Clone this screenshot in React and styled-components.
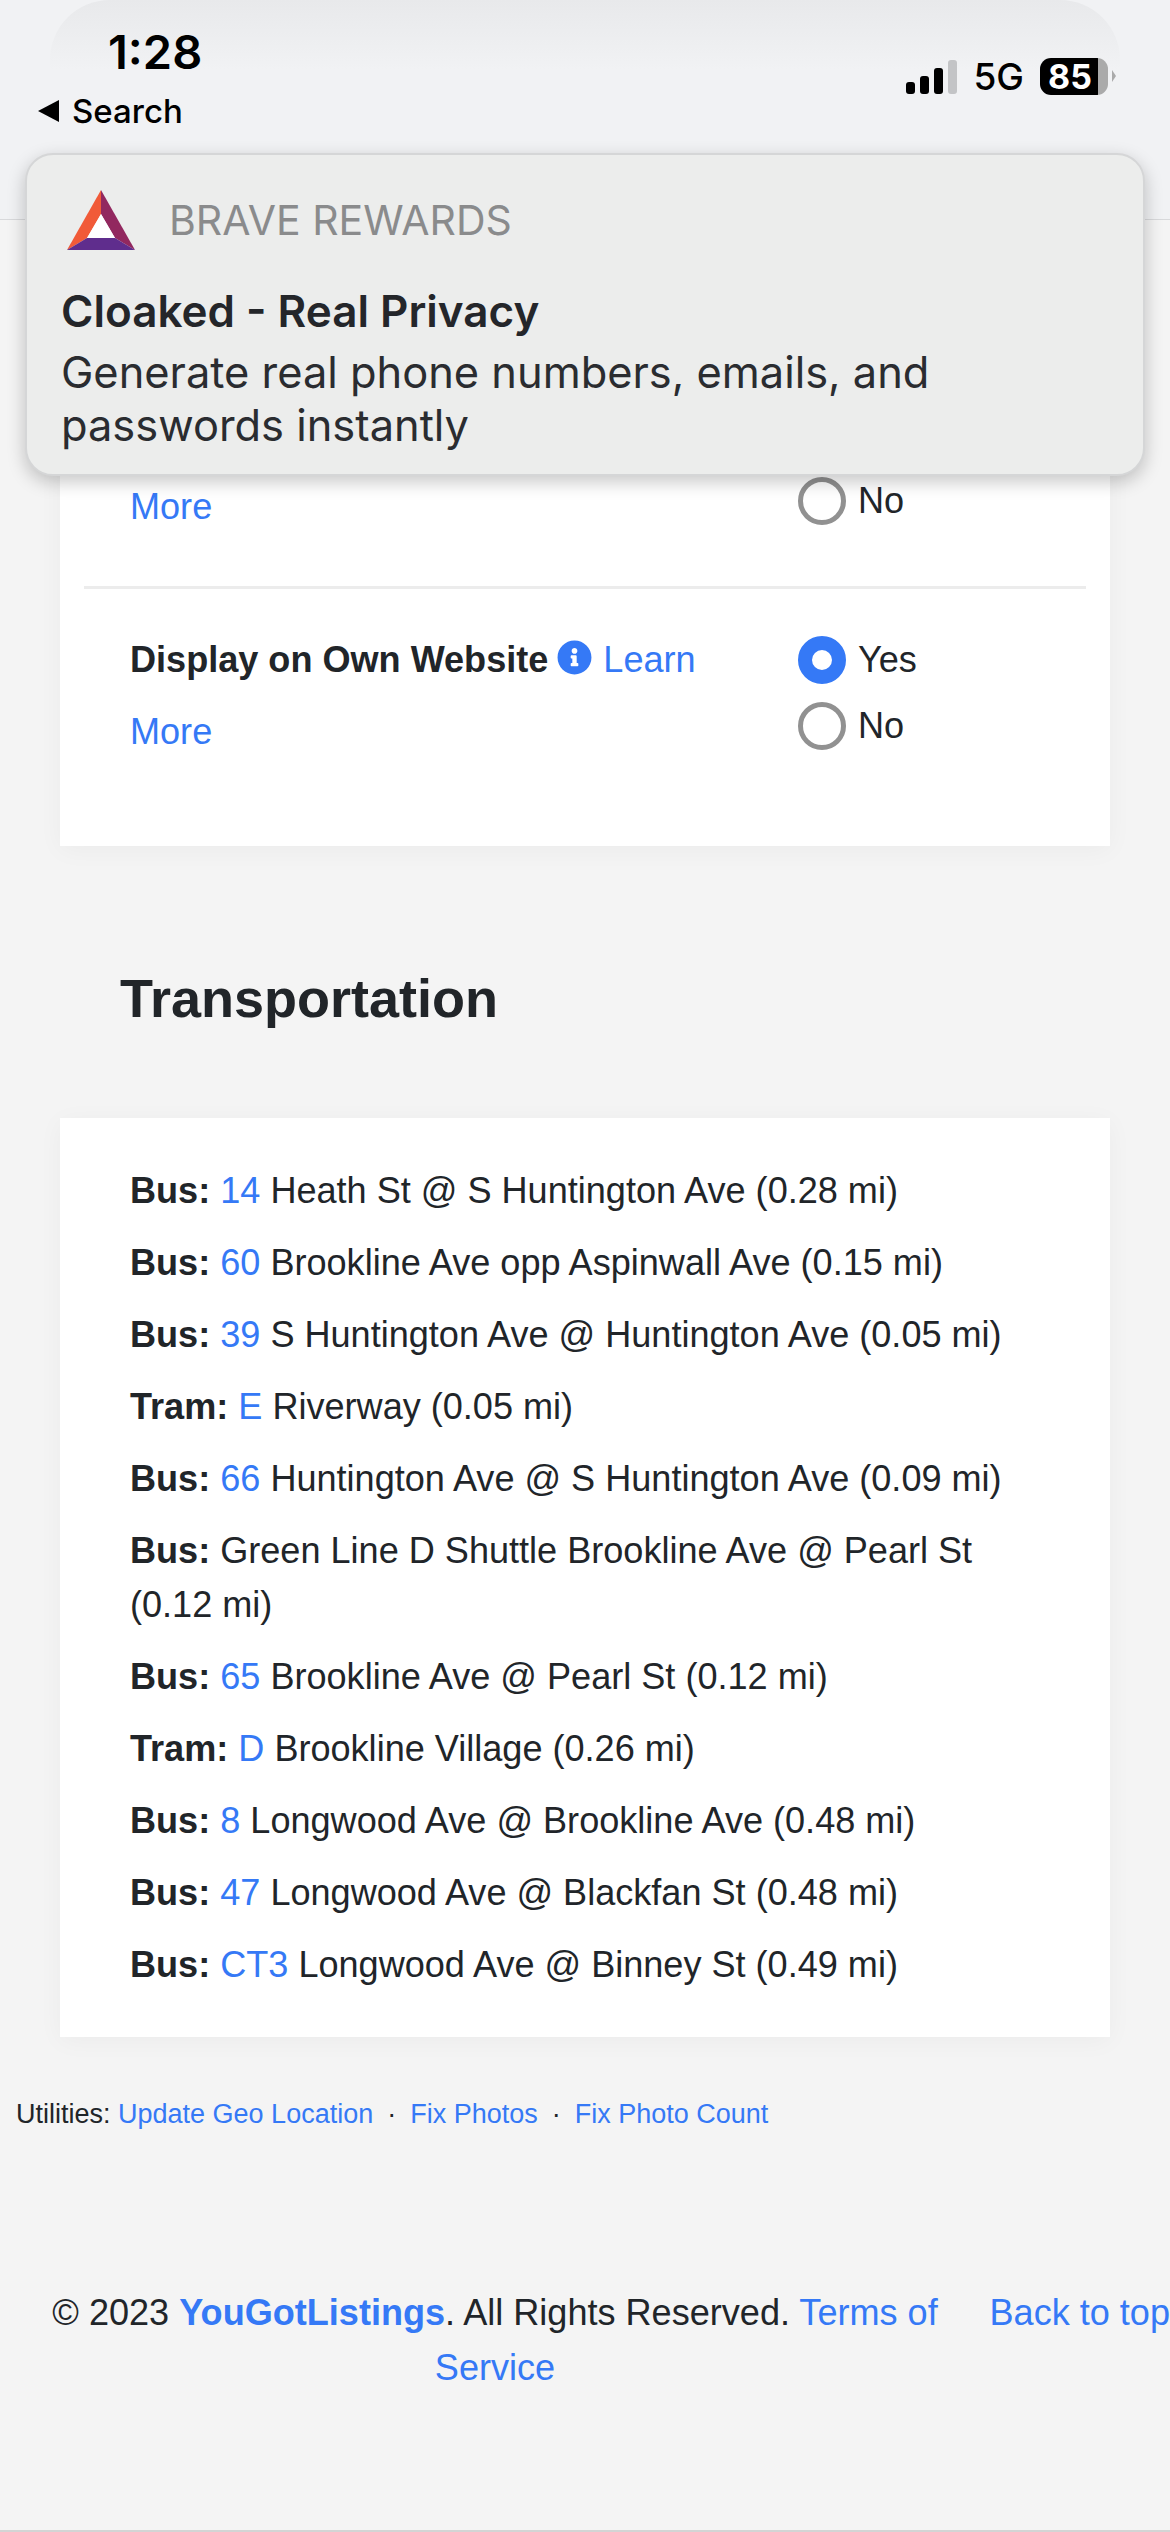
import styled, { createGlobalStyle } from "styled-components"
import { FaInfoCircle } from "react-icons/fa"

const GlobalStyle = createGlobalStyle`
    html, body {
        margin: 0;
        padding: 0;
        background: #f4f4f4;
    }
    * {
        box-sizing: border-box;
    }
`

const Screen = styled.div`
    position: relative;
    width: 1170px;
    height: 2532px;
    overflow: hidden;
    background: #f4f4f4;
    border-bottom: 2px solid #d4d4d4;
    font-family: "Liberation Sans", Arial, sans-serif;
    color: #212529;
    font-size: 36.1px;
`

const Header = styled.header`
    position: relative;
    height: 220px;
    display: flex;
    justify-content: space-between;
    align-items: flex-start;
    padding: 24px 62px 0 38px;
    background: #f1f2f4;
    border-bottom: 1px solid #d8d9db;
    font-family: Inter, Roboto, sans-serif;
    color: #000;
    &::before {
        content: "";
        position: absolute;
        top: 0;
        left: 50px;
        right: 50px;
        height: 70px;
        border-radius: 60px 60px 0 0;
        background: linear-gradient(#e8e9eb, #f1f2f4);
    }
`

const StatusLeft = styled.div`
    position: relative;
    display: flex;
    flex-direction: column;
`

const Time = styled.div`
    margin-left: 70px;
    font-size: 47px;
    line-height: 56px;
    font-weight: 600;
`

const BackLink = styled.div`
    display: flex;
    align-items: center;
    gap: 13px;
    margin-top: 3px;
    font-size: 33px;
    line-height: 56px;
    font-weight: 500;
`

const BackArrow = styled.span`
    width: 0;
    height: 0;
    border-style: solid;
    border-width: 11px 21px 11px 0;
    border-color: transparent #000 transparent transparent;
`

const StatusRight = styled.div`
    position: relative;
    display: flex;
    align-items: center;
    margin-top: 30px;
`

const Signal = styled.div`
    display: flex;
    align-items: flex-end;
    gap: 5px;
    height: 34px;
    margin-right: 16px;
`

const SignalBar = styled.span`
    width: 9px;
    height: ${props => props.$height}px;
    border-radius: 3px;
    background: ${props => props.$off ? "#c3c4c6" : "#000"};
`

const Network = styled.span`
    font-size: 37px;
    font-weight: 500;
    margin-right: 16px;
`

const Battery = styled.div`
    position: relative;
    width: 68px;
    height: 37px;
    border-radius: 11px;
    display: flex;
    align-items: center;
    padding-left: 8px;
    background: linear-gradient(90deg, #000 85%, #aaa 85%);
    color: #fff;
    font-size: 34px;
    font-weight: 700;
    &::after {
        content: "";
        position: absolute;
        top: 12px;
        right: -8px;
        border-style: solid;
        border-width: 6px 0 6px 4px;
        border-color: transparent transparent transparent #aaa;
    }
`

const Notice = styled.aside`
    position: absolute;
    top: 153px;
    left: 25px;
    width: 1120px;
    height: 323px;
    z-index: 2;
    padding: 0 34px;
    border-radius: 28px;
    border: 2px solid #d5d6d7;
    background: #ecedec;
    box-shadow: 0 6px 18px rgba(0, 0, 0, 0.22);
    font-family: Inter, Roboto, sans-serif;
`

const NoticeHead = styled.div`
    display: flex;
    align-items: center;
    gap: 34px;
    height: 100px;
    margin-top: 15px;
    padding-left: 6px;
`

const NoticeApp = styled.span`
    font-size: 41px;
    color: #8a8b8c;
`

const NoticeTitle = styled.div`
    margin-top: 15px;
    font-size: 44px;
    line-height: 52px;
    font-weight: 600;
    color: #24262a;
`

const NoticeText = styled.div`
    margin-top: 9px;
    width: 960px;
    font-size: 43.4px;
    line-height: 53px;
    color: #2a2c30;
`

const Section = styled.section`
    margin: 0 60px;
    background: #fff;
    box-shadow: 0 4px 24px rgba(0, 0, 0, 0.04);
`

const SettingsCard = styled(Section)`
    margin-top: 220px;
    padding: 31px 24px 78px;
`

const SettingRow = styled.div`
    display: grid;
    grid-template-columns: 668px 1fr;
    padding: ${props => props.$first ? "0 46px 43px" : "35px 46px 0"};
    border-bottom: ${props => props.$first ? "3px solid #ececec" : "none"};
`

const SettingLabel = styled.div`
    width: 600px;
    line-height: 72px;
`

const Strong = styled.strong`
    font-weight: 700;
`

const Link = styled.a`
    color: #3579f6;
    font-weight: ${props => props.$bold ? 700 : 400};
    white-space: ${props => props.$nowrap ? "nowrap" : "normal"};
`

const InfoIcon = styled(FaInfoCircle)`
    width: 35px;
    height: 35px;
    margin: 0 11px 0 9px;
    color: #3579f6;
    vertical-align: -3px;
`

const RadioGroup = styled.div`
    display: flex;
    flex-direction: column;
    gap: 18px;
    margin-top: ${props => props.$offset}px;
`

const Radio = styled.div`
    display: flex;
    align-items: center;
    gap: 12px;
    height: 48px;
`

const RadioDot = styled.span`
    width: 48px;
    height: 48px;
    border-radius: 50%;
    background: #fff;
    border: ${props => props.$checked ? "14px solid #3579f6" : "5px solid #919191"};
`

const Heading = styled.h2`
    margin: 122px 0 0 120px;
    font-size: 54px;
    line-height: 60px;
    font-weight: 700;
`

const TransportCard = styled(Section)`
    margin-top: 90px;
    padding: 46px 70px 45px;
`

const TransportRow = styled.p`
    margin: 0 0 18px;
    line-height: 54px;
    &:last-child {
        margin-bottom: 0;
    }
`

const Utilities = styled.div`
    margin: 61px 0 0 16px;
    font-size: 27px;
    line-height: 32px;
`

const Dot = styled.span`
    margin: 0 14px;
`

const Footer = styled.footer`
    display: flex;
    align-items: flex-start;
    margin-top: 155px;
    line-height: 55px;
`

const Copyright = styled.div`
    width: 990px;
    padding: 0 0 0 40px;
    text-align: center;
    > div {
        width: 910px;
    }
`

const transport = [
    { type: "Bus", line: "14", place: "Heath St @ S Huntington Ave (0.28 mi)" },
    { type: "Bus", line: "60", place: "Brookline Ave opp Aspinwall Ave (0.15 mi)" },
    { type: "Bus", line: "39", place: "S Huntington Ave @ Huntington Ave (0.05 mi)" },
    { type: "Tram", line: "E", place: "Riverway (0.05 mi)" },
    { type: "Bus", line: "66", place: "Huntington Ave @ S Huntington Ave (0.09 mi)" },
    { type: "Bus", place: "Green Line D Shuttle Brookline Ave @ Pearl St (0.12 mi)" },
    { type: "Bus", line: "65", place: "Brookline Ave @ Pearl St (0.12 mi)" },
    { type: "Tram", line: "D", place: "Brookline Village (0.26 mi)" },
    { type: "Bus", line: "8", place: "Longwood Ave @ Brookline Ave (0.48 mi)" },
    { type: "Bus", line: "47", place: "Longwood Ave @ Blackfan St (0.48 mi)" },
    { type: "Bus", line: "CT3", place: "Longwood Ave @ Binney St (0.49 mi)" },
]

function BraveLogo() {
    return (
        <svg width="68" height="60" viewBox="0 0 68 60">
            <polygon points="34,0 0,60 20,48 34,24" fill="#f15a38" />
            <polygon points="34,0 68,60 48,48 34,24" fill="#92285f" />
            <polygon points="0,60 68,60 48,48 20,48" fill="#5f2d8d" />
            <polygon points="34,24 48,48 20,48" fill="#fff" />
        </svg>
    )
}

function App() {
    return (
        <Screen>
            <GlobalStyle />
            <Header>
                <StatusLeft>
                    <Time>1:28</Time>
                    <BackLink><BackArrow />Search</BackLink>
                </StatusLeft>
                <StatusRight>
                    <Signal>
                        <SignalBar $height={12} />
                        <SignalBar $height={18} />
                        <SignalBar $height={26} />
                        <SignalBar $height={34} $off />
                    </Signal>
                    <Network>5G</Network>
                    <Battery>85</Battery>
                </StatusRight>
            </Header>
            <Notice>
                <NoticeHead>
                    <BraveLogo />
                    <NoticeApp>BRAVE REWARDS</NoticeApp>
                </NoticeHead>
                <NoticeTitle>Cloaked - Real Privacy</NoticeTitle>
                <NoticeText>Generate real phone numbers, emails, and passwords instantly</NoticeText>
            </Notice>
            <SettingsCard>
                <SettingRow $first>
                    <SettingLabel><Link>More</Link></SettingLabel>
                    <RadioGroup $offset={6}>
                        <Radio><RadioDot />No</Radio>
                    </RadioGroup>
                </SettingRow>
                <SettingRow>
                    <SettingLabel>
                        <Strong>Display on Own Website</Strong>
                        <InfoIcon />
                        <Link>Learn More</Link>
                    </SettingLabel>
                    <RadioGroup $offset={12}>
                        <Radio><RadioDot $checked />Yes</Radio>
                        <Radio><RadioDot />No</Radio>
                    </RadioGroup>
                </SettingRow>
            </SettingsCard>
            <Heading>Transportation</Heading>
            <TransportCard>
                {transport.map(item => (
                    <TransportRow key={item.type + item.place}>
                        <Strong>{item.type}:</Strong>{" "}
                        {item.line && <><Link>{item.line}</Link>{" "}</>}
                        {item.place}
                    </TransportRow>
                ))}
            </TransportCard>
            <Utilities>
                Utilities: <Link>Update Geo Location</Link>
                <Dot>·</Dot>
                <Link>Fix Photos</Link>
                <Dot>·</Dot>
                <Link>Fix Photo Count</Link>
            </Utilities>
            <Footer>
                <Copyright>
                    <div>
                        © 2023 <Link $bold>YouGotListings</Link>. All Rights Reserved. <Link>Terms of Service</Link>
                    </div>
                </Copyright>
                <Link $nowrap>Back to top</Link>
            </Footer>
        </Screen>
    )
}

export default App
